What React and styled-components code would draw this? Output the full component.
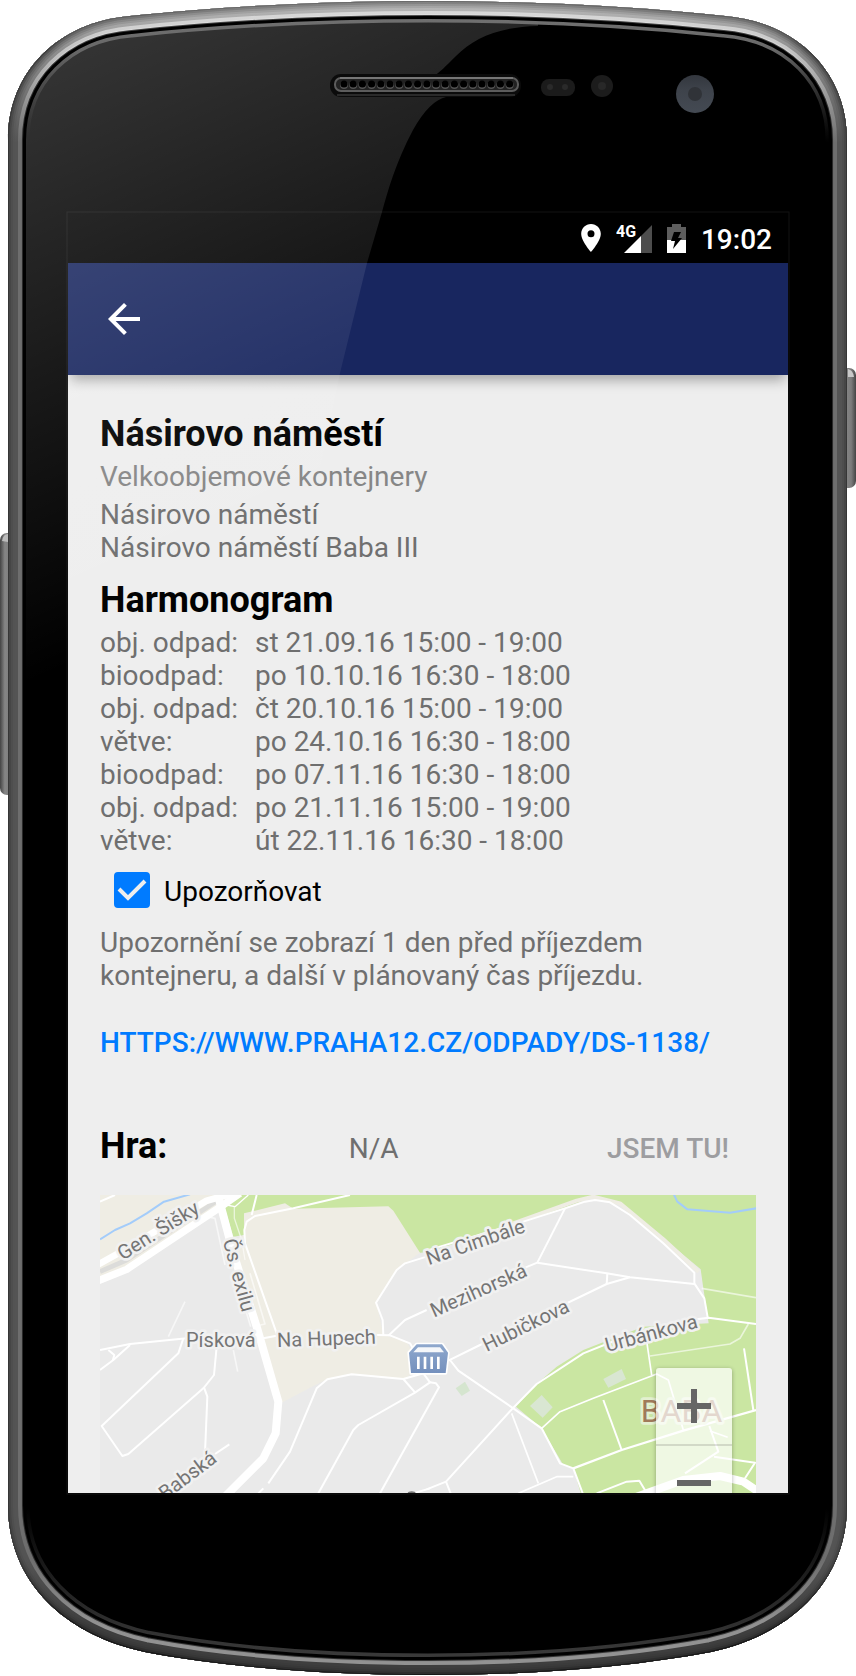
import React from 'react';
import styled, { createGlobalStyle, css } from 'styled-components';

const GlobalStyle = createGlobalStyle`
  *, *::before, *::after { box-sizing: border-box; }
  body { margin: 0; background: #fff; font-family: Roboto, "Liberation Sans", sans-serif; }
`;

/* ---------- device ---------- */

const Device = styled.main`
  position: relative;
  width: 100%;
  aspect-ratio: 856 / 1676;
  display: grid;
  grid-template-columns: minmax(0, 68fr) minmax(0, 720fr) minmax(0, 68fr);
  grid-template-rows: minmax(0, 213fr) minmax(0, 1280fr) minmax(0, 183fr);
  overflow: hidden;
`;

const DeviceArt = styled.svg`
  position: absolute;
  inset: 0;
  width: 100%;
  height: 100%;
  pointer-events: none;
`;

const Screen = styled.div`
  position: relative;
  grid-area: 2 / 2;
  display: flex;
  flex-direction: column;
  overflow: hidden;
  background: #eee;
`;

const BODY =
  'M8 140 C8 72 58 22 130 16 C215 7 320 1 428 1 C536 1 640 7 725 16 C797 22 847 72 847 140 V1505 C847 1580 793 1634 711 1652 C625 1668 526 1675 428 1675 C330 1675 230 1668 145 1652 C62 1634 8 1580 8 1505 Z';

const RIM = [
  { depth: 15, top: '#4a4a4a', corner: '#3a3a3a', side: '#2a2a2a', bottom: '#333' },
  { depth: 14, top: '#e4e4e4', corner: '#d2d2d2', side: '#6a6a6a', bottom: '#8c8c8c' },
  { depth: 13, top: '#dedede', corner: '#c4c4c4', side: '#6e6e6e', bottom: '#929292' },
  { depth: 10, top: '#bcbcbc', corner: '#8e8e8e', side: '#545454', bottom: '#3e3e3e' },
  { depth: 7, top: '#acacac', corner: '#7c7c7c', side: '#535353', bottom: '#3b3b3b' },
  { depth: 5, top: '#9a9a9a', corner: '#6a6a6a', side: '#4e4e4e', bottom: '#373737' },
  { depth: 3, top: '#868686', corner: '#555', side: '#464646', bottom: '#2e2e2e' },
  { depth: 1, top: '#6c6c6c', corner: '#3c3c3c', side: '#363636', bottom: '#161616' },
];

function DeviceBody() {
  return (
    <DeviceArt viewBox="0 0 856 1676" preserveAspectRatio="none" aria-hidden="true">
      <defs>
        <linearGradient id="sideButton" x1="0" x2="1">
          <stop offset="0" stopColor="#444" />
          <stop offset=".3" stopColor="#858585" />
          <stop offset=".7" stopColor="#7c7c7c" />
          <stop offset="1" stopColor="#444" />
        </linearGradient>
      </defs>
      <rect x="0" y="533" width="16" height="262" rx="7" fill="url(#sideButton)" />
      <path d="M2 541 Q3 534 8 534 V542 Z" fill="#bbb" />
      <rect x="840" y="368" width="16" height="120" rx="7" fill="url(#sideButton)" />
      <path d="M848 369 Q853 370 854 377 H848 Z" fill="#c8c8c8" />
      <path d={BODY} fill="#000" />
    </DeviceArt>
  );
}

function DeviceFront() {
  const holes = Array.from({ length: 19 }, (_, i) => 344 + i * 9.2);
  return (
    <DeviceArt viewBox="0 0 856 1676" preserveAspectRatio="none" aria-hidden="true">
      <defs>
        <clipPath id="bodyClip"><path d={BODY} /></clipPath>
        <linearGradient id="glare" gradientUnits="userSpaceOnUse" x1="40" y1="60" x2="270" y2="578">
          <stop offset="0" stopColor="#fff" stopOpacity=".205" />
          <stop offset="1" stopColor="#fff" stopOpacity="0" />
        </linearGradient>
        <linearGradient id="glassEdge" gradientUnits="userSpaceOnUse" x1="0" y1="0" x2="0" y2="1676">
          <stop offset="0" stopColor="#747474" />
          <stop offset=".03" stopColor="#686868" />
          <stop offset=".085" stopColor="#444" stopOpacity="0" />
          <stop offset=".9" stopColor="#333" stopOpacity="0" />
          <stop offset=".96" stopColor="#2a2a2a" />
          <stop offset="1" stopColor="#404040" />
        </linearGradient>
        {RIM.map((r) => (
          <linearGradient key={r.depth} id={`rim${r.depth}`} gradientUnits="userSpaceOnUse" x1="0" y1="0" x2="0" y2="1676">
            <stop offset="0" stopColor={r.top} />
            <stop offset=".03" stopColor={r.corner} />
            <stop offset=".085" stopColor={r.side} />
            <stop offset=".93" stopColor={r.side} />
            <stop offset=".97" stopColor={r.bottom} />
            <stop offset="1" stopColor={r.bottom} />
          </linearGradient>
        ))}
        <linearGradient id="camera" x1="0" y1="0" x2="0" y2="1">
          <stop offset="0" stopColor="#33373e" />
          <stop offset=".4" stopColor="#3e434b" />
          <stop offset="1" stopColor="#444a53" />
        </linearGradient>
      </defs>
      <g clipPath="url(#bodyClip)" fill="none">
        <path
          d="M8 0 H538 V26 C498 27 474 38 456 56 C445 67 440 72 434 76 L446 97 C436 99 424 110 413 130 C396 162 388 190 382 212 L367 263 L340 373 L260 760 H8 Z"
          fill="url(#glare)"
        />
        <path d={BODY} stroke="url(#glassEdge)" strokeWidth="43" />
        <path d={BODY} stroke="#000" strokeWidth="36" />
        {RIM.map((r) => (
          <path key={r.depth} d={BODY} stroke={`url(#rim${r.depth})`} strokeWidth={r.depth * 2} />
        ))}
      </g>
      <rect x="67" y="212" width="722" height="1282" fill="none" stroke="#fff" strokeOpacity=".07" />

      <rect x="330" y="74" width="191" height="23" rx="11" fill="#0b0b0b" />
      <path d="M337 95 H515" stroke="#4a4a4a" fill="none" />
      <rect x="335" y="78" width="183" height="13" rx="6" fill="#222" stroke="#5c5c5c" strokeWidth="2" />
      <path d="M340 78 H513" stroke="#909090" strokeWidth="1" />
      {holes.map((x) => (
        <g key={x}>
          <circle cx={x} cy="85" r="4" fill="#555" />
          <circle cx={x} cy="84" r="3.6" fill="#000" />
        </g>
      ))}

      <rect x="541" y="79" width="34" height="17" rx="8" fill="#1b1b1b" />
      <circle cx="550" cy="87" r="3" fill="#2a2a2a" />
      <circle cx="565" cy="87" r="3" fill="#2a2a2a" />
      <circle cx="602" cy="86" r="11" fill="#1c1c1c" />
      <circle cx="602" cy="86" r="4" fill="#282828" />
      <circle cx="695" cy="94" r="19" fill="url(#camera)" />
      <circle cx="695" cy="94" r="7" fill="#303338" />
    </DeviceArt>
  );
}

/* ---------- bars ---------- */

const StatusBar = styled.div`
  flex: none;
  display: flex;
  align-items: center;
  justify-content: flex-end;
  gap: 15px;
  height: 50px;
  padding: 0 16px;
  background: #000;
  color: #fff;
`;

const StatusIcon = styled.svg`
  flex: none;
  display: block;
`;

const Clock = styled.time`
  font-size: 28px;
  font-weight: 500;
  line-height: 33px;
  padding-top: 2px;
`;

const AppBar = styled.header`
  flex: none;
  position: relative;
  display: flex;
  align-items: center;
  height: 112px;
  padding: 0 32px;
  background: #18265f;
  box-shadow: 0 8px 12px -3px rgba(0, 0, 0, 0.32);
`;

const IconButton = styled.button`
  display: grid;
  place-items: center;
  width: 48px;
  height: 48px;
  padding: 0;
  border: 0;
  background: none;
  color: #fff;
`;

/* ---------- content ---------- */

const Content = styled.div`
  flex: none;
  display: flex;
  flex-direction: column;
  padding: 38px 32px 32px;
`;

const Heading = styled.h2`
  margin: ${(p) => (p.$spaced ? '15px' : '0')} 0 5px;
  font-size: 36px;
  font-weight: 700;
  line-height: 42px;
  color: #000;
`;

const Text = styled.p`
  margin: 0 0 ${(p) => p.$after || 0}px;
  font-size: 28px;
  line-height: 33px;
  color: ${(p) => (p.$light ? '#868686' : '#6f6f6f')};
`;

const Schedule = styled.table`
  border-collapse: collapse;
  table-layout: fixed;
  width: 100%;
  font-size: 28px;
  line-height: 33px;
  color: #6f6f6f;

  th, td { padding: 0; text-align: left; font-weight: 400; }
  th { width: 155px; }
`;

const CheckRow = styled.label`
  display: flex;
  align-items: flex-end;
  gap: 14px;
  margin: 15px 0 18px;
  padding-left: 14px;
  font-size: 28px;
  line-height: 33px;
  color: #000;
`;

const CheckBox = styled.span`
  display: grid;
  width: 36px;
  height: 36px;

  > * { grid-area: 1 / 1; }
  input {
    appearance: none;
    width: 36px;
    height: 36px;
    margin: 0;
    border: 2px solid #757575;
    border-radius: 4px;
  }
  input:checked { border-color: #007bff; background: #007bff; }
  svg { pointer-events: none; visibility: hidden; }
  input:checked + svg { visibility: visible; }
`;

const buttonText = css`
  font-size: 28px;
  font-weight: 500;
  line-height: 33px;
  text-transform: uppercase;
`;

const WebLink = styled.a`
  ${buttonText}
  align-self: flex-start;
  margin: 34px 0 66px;
  color: #007bff;
  text-decoration: none;
`;

const GameRow = styled.section`
  display: grid;
  grid-template-columns: auto 1fr 176px;
  align-items: baseline;
  margin-bottom: 23px;

  p { text-align: center; }
`;

const CheckInButton = styled.button`
  ${buttonText}
  padding: 0;
  border: 0;
  background: none;
  font-family: inherit;
  color: #9d9da0;
`;

/* ---------- map ---------- */

const MapPanel = styled.section`
  position: relative;
  height: 349px;
  overflow: hidden;
  background: #eaeaea;
`;

const MapDrawing = styled.svg`
  display: block;
  width: 100%;
  height: 100%;
`;

const Road = styled.polyline`
  fill: none;
  stroke: ${(p) => p.$color || '#fff'};
  stroke-width: ${(p) => p.$w || 6};
  stroke-linejoin: round;
  opacity: ${(p) => (p.$faint ? 0.6 : 1)};
`;

const Street = styled.text`
  font-family: Roboto, "Liberation Sans", sans-serif;
  font-size: 60px;
  fill: #757575;
  stroke: #f1f1f1;
  stroke-width: 16px;
  stroke-linejoin: round;
  paint-order: stroke;
`;

const District = styled(Street)`
  font-size: 96px;
  fill: #a07a5a;
  stroke: #e3f0d0;
`;

const ZoomControl = styled.div`
  position: absolute;
  right: 24px;
  bottom: 24px;
  display: flex;
  flex-direction: column;
  border-radius: 3px;
  background: rgba(255, 255, 255, 0.7);
  box-shadow: 0 1px 4px rgba(0, 0, 0, 0.3);
`;

const ZoomButton = styled.button`
  display: grid;
  place-items: center;
  width: 76px;
  height: 76px;
  padding: 0;
  border: 0;
  background: none;
  color: #666;

  & + & { border-top: 2px solid rgba(0, 0, 0, 0.12); }
`;

const WEST_ROADS = [
  ['30,65 75,45'],
  ['500,45 485,105'],
  ['780,45 610,85 495,108 470,125 463,150 465,190 560,460'],
  ['410,75 435,80 475,45', 4],
  ['433,78 433,115 455,180 465,240', 4, true],
  ['350,110 375,115 405,255', 5, true],
  ['440,300 482,440', 5, true],
  ['480,280 525,432 490,440', 5, true],
  ['30,510 120,492 290,475'],
  ['280,475 265,520 35,738 97,828 115,822 340,625 372,585 380,500'],
  ['342,622 352,650 345,820'],
  ['418,793 375,822'],
  ['30,570 70,540 120,495'],
  ['55,510 73,525 68,542'],
  ['285,365 235,470', 5, true],
  ['430,510 443,575', 5, true],
  ['520,475 560,467'],
  ['860,465 900,466 960,490 1000,560'],
  ['1010,230 945,250 920,270 858,368 878,420 880,465'],
  ['1010,390 945,420 895,467'],
  ['535,910 600,815 680,625 712,598 785,583 940,597 1000,580'],
  ['505,940 520,925'],
  ['940,597 975,637'],
  ['685,940 790,750 805,735 975,638 1020,607 1000,580'],
  ['1020,607 1038,610 1047,622 870,940'],
  ['960,943 1020,925'],
];

const EAST_ROADS = [
  ['-10,928 48,905 248,685 320,612 460,520 560,480'],
  ['800,418 836,413 978,432'],
  ['48,905 62,940'],
  ['60,540 85,572 250,685 335,745 390,850 430,865 458,940'],
  ['55,542 150,495 530,312 600,292'],
  ['245,700 325,910', 5],
  ['265,940 380,890 430,890', 5],
  ['-20,215 280,125 405,85 465,65 495,60 540,67 600,105 700,190 793,278 793,310 823,355 833,412'],
  ['405,85 322,248'],
  ['280,265 322,248 530,280 600,292 793,312'],
  ['530,312 532,280'],
  ['815,325 978,353', 5, true],
  ['955,432 930,475 900,492 660,528', 5, true],
  ['648,470 665,585', 5],
  ['335,745 390,695 490,655 680,582 715,600 760,750', 5],
  ['430,865 575,810 760,752 978,690', 7],
  ['520,660 575,810'],
  ['942,505 970,690'],
  ['838,738 865,815 765,880'],
  ['840,753 893,772', 5],
  ['852,830 975,848 945,895'],
  ['500,940 590,905 628,902 648,935'],
];

function Roads({ list }) {
  return list.map(([points, w, faint]) => <Road key={points} points={points} $w={w} $faint={faint} />);
}

function StreetMap() {
  return (
    <MapDrawing viewBox="0 0 1968 1047" preserveAspectRatio="xMidYMin slice" role="img" aria-label="Mapa okolí">
      <defs>
        <linearGradient id="bin" x1="0" x2="0" y1="0" y2="1">
          <stop offset="0" stopColor="#8fa8cd" />
          <stop offset="1" stopColor="#7490bd" />
        </linearGradient>
      </defs>
      <rect width="1968" height="1047" fill="#eaeaea" />
      <g transform="translate(-30 -45)">
        <polygon points="30,45 420,45 385,80 110,265 30,295" fill="#efede4" />
        <polygon points="400,70 450,40 1060,40 1060,212 990,218 610,100 462,165 430,170" fill="#cae6a2" />
        <polygon points="462,100 585,70 610,86 895,79 910,92 990,218 920,270 860,368 880,465 950,485 990,560 945,597 785,583 712,598 670,618 575,668 520,480 430,180 462,165" fill="#efede4" />
      </g>
      <g transform="translate(990 -45)">
        <polygon points="30,40 980,40 980,1100 500,1100 430,865 400,855 335,745 258,680 320,612 380,560 460,510 550,475 640,440 836,430 820,325 812,268 700,175 570,70 490,50 410,80 200,150 30,205" fill="#cae6a2" />
        <Road points="250,130 440,62 490,50 570,70 700,178 806,275" $w={12} $color="#efede4" />
        <polygon points="520,597 575,567 588,597 535,623" fill="#d9e6d2" />
        <polygon points="300,678 335,645 368,682 338,713" fill="#d9e6d2" />
        <polygon points="77,625 105,605 120,632 95,648" fill="#d5e5cf" />
        <Road points="730,40 742,65 772,88 900,98 985,84" $color="#a3ccfa" />
        <Roads list={EAST_ROADS} />
        <Road points="620,950 760,900 870,888 940,905 1000,945" $w={24} />
      </g>
      <g transform="translate(-30 -45)">
        <Road points="30,178 75,150 120,130 170,100 222,65 300,43" $color="#a3ccfa" />
        <Road points="30,275 110,240 400,50" $w={14} $color="#dcdcda" />
        <Road points="20,256 90,217 350,62 430,40" $w={20} />
        <Road points="20,304 110,268 385,85 450,40" $w={22} />
        <Roads list={WEST_ROADS} />
        <Road points="385,50 430,220 500,440 565,665 557,760 520,835 380,975" $w={24} />
      </g>
      <g transform="translate(-30 -45)">
        <Street transform="translate(98 242) rotate(-32)">Gen. Šišky</Street>
        <Street transform="translate(398 182) rotate(75)">Čs. exilu</Street>
        <Street x="288" y="502">Písková</Street>
        <Street transform="translate(562 501) rotate(-2)">Na Hupech</Street>
        <Street transform="translate(226 962) rotate(-37)">Babská</Street>
        <ellipse cx="965" cy="940" rx="12" ry="6" fill="#757575" />
        <path
          d="M957 518 L980 493 H1056 L1074 518 L1067 579 H963 Z"
          fill="url(#bin)"
          stroke="#fff"
          strokeWidth="10"
          paintOrder="stroke"
          strokeLinejoin="round"
        />
        <path d="M970 517 L984 502 H1050 L1062 517 Z" fill="#f5f7fa" />
        <path d="M985 530 V567 M1005 530 V567 M1025 530 V567 M1045 530 V567" stroke="#fff" strokeWidth="8" />
      </g>
      <g transform="translate(990 -45)">
        <Street transform="translate(-4 256) rotate(-19)">Na Cimbále</Street>
        <Street transform="translate(12 413) rotate(-24)">Mezihorská</Street>
        <Street transform="translate(170 516) rotate(-26)">Hubičkova</Street>
        <Street transform="translate(532 516) rotate(-15)">Urbánkova</Street>
        <District x="632" y="725">BABA</District>
      </g>
    </MapDrawing>
  );
}

/* ---------- page ---------- */

const PICKUPS = [
  ['obj. odpad:', 'st 21.09.16 15:00 - 19:00'],
  ['bioodpad:', 'po 10.10.16 16:30 - 18:00'],
  ['obj. odpad:', 'čt 20.10.16 15:00 - 19:00'],
  ['větve:', 'po 24.10.16 16:30 - 18:00'],
  ['bioodpad:', 'po 07.11.16 16:30 - 18:00'],
  ['obj. odpad:', 'po 21.11.16 15:00 - 19:00'],
  ['větve:', 'út 22.11.16 16:30 - 18:00'],
];

const NetworkLabel = styled.text`
  font-family: Roboto, "Liberation Sans", sans-serif;
  font-size: 16px;
  font-weight: 700;
  fill: #fff;
`;

export default function App() {
  return (
    <>
      <GlobalStyle />
      <Device>
        <DeviceBody />
        <Screen>
          <StatusBar>
            <StatusIcon width="20" height="28" viewBox="5 2 14 20" fill="#fff">
              <path d="M12 2C8.13 2 5 5.13 5 9c0 5.25 7 13 7 13s7-7.75 7-13c0-3.87-3.13-7-7-7zm0 9.5a2.5 2.5 0 1 1 0-5 2.5 2.5 0 0 1 0 5z" />
            </StatusIcon>
            <StatusIcon width="36" height="29" viewBox="0 0 36 29">
              <path d="M8 29 H25 V12 Z" fill="#fff" />
              <path d="M25 12 L36 1 V29 H25 Z" fill="#4d4d4d" />
              <NetworkLabel x="0" y="13" stroke="#000" strokeWidth="2" paintOrder="stroke">4G</NetworkLabel>
            </StatusIcon>
            <StatusIcon width="19" height="29" viewBox="0 0 19 29">
              <path d="M5 0 H14 V3 H19 V16 H0 V3 H5 Z" fill="#5e5e5e" />
              <path d="M0 16 H19 V29 H0 Z" fill="#fff" />
              <path d="M7 8 H14 L11 14 H15 L6 25 L8 17 H4 Z" fill="#000" />
            </StatusIcon>
            <Clock>19:02</Clock>
          </StatusBar>
          <AppBar>
            <IconButton type="button" aria-label="Zpět">
              <svg width="48" height="48" viewBox="0 0 24 24" fill="currentColor">
                <path d="M20 11H7.83l5.59-5.59L12 4l-8 8 8 8 1.41-1.41L7.83 13H20v-2z" />
              </svg>
            </IconButton>
          </AppBar>
          <Content>
            <Heading>Násirovo náměstí</Heading>
            <Text $light $after={5}>Velkoobjemové kontejnery</Text>
            <Text>Násirovo náměstí</Text>
            <Text>Násirovo náměstí Baba III</Text>
            <Heading $spaced>Harmonogram</Heading>
            <Schedule>
              <tbody>
                {PICKUPS.map(([kind, when]) => (
                  <tr key={when}>
                    <th scope="row">{kind}</th>
                    <td>{when}</td>
                  </tr>
                ))}
              </tbody>
            </Schedule>
            <CheckRow>
              <CheckBox>
                <input type="checkbox" defaultChecked />
                <svg width="36" height="36" viewBox="0 0 36 36" fill="none" stroke="#eee" strokeWidth="4">
                  <path d="M5 17 L14 26 L31 9" />
                </svg>
              </CheckBox>
              Upozorňovat
            </CheckRow>
            <Text>Upozornění se zobrazí 1 den před příjezdem kontejneru, a další v plánovaný čas příjezdu.</Text>
            <WebLink href="https://www.praha12.cz/odpady/ds-1138/">https://www.praha12.cz/odpady/ds-1138/</WebLink>
            <GameRow>
              <Heading>Hra:</Heading>
              <Text>N/A</Text>
              <CheckInButton type="button" disabled>Jsem tu!</CheckInButton>
            </GameRow>
            <MapPanel>
              <StreetMap />
              <ZoomControl>
                <ZoomButton type="button" aria-label="Přiblížit">
                  <svg width="34" height="34" viewBox="0 0 34 34" stroke="currentColor" strokeWidth="6">
                    <path d="M0 17 H34 M17 0 V34" />
                  </svg>
                </ZoomButton>
                <ZoomButton type="button" aria-label="Oddálit">
                  <svg width="34" height="34" viewBox="0 0 34 34" stroke="currentColor" strokeWidth="6">
                    <path d="M0 17 H34" />
                  </svg>
                </ZoomButton>
              </ZoomControl>
            </MapPanel>
          </Content>
        </Screen>
        <DeviceFront />
      </Device>
    </>
  );
}
